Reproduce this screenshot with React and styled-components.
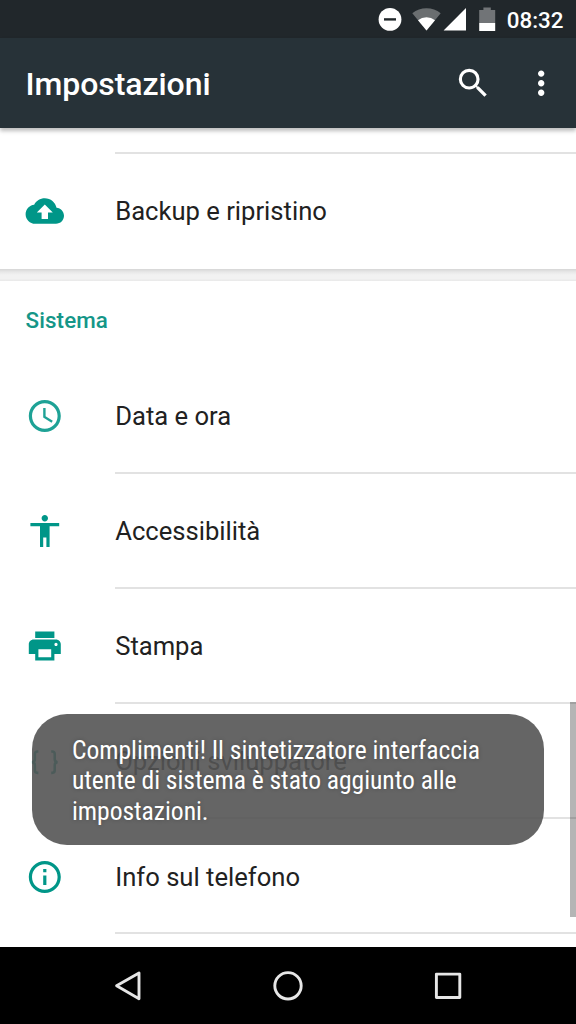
import React from "react";
import styled, { createGlobalStyle } from "styled-components";
import { MdSearch, MdMoreVert } from "react-icons/md";

const GlobalStyle = createGlobalStyle`
body {
margin: 0;
background: #000;
font-family: Roboto, "Noto Sans", sans-serif;
}
* {
box-sizing: border-box;
}
svg {
display: block;
flex: none;
}
`;

const Screen = styled.div`
position: relative;
display: flex;
flex-direction: column;
width: 576px;
height: 1024px;
overflow: hidden;
background: #fff;
`;

const StatusBar = styled.div`
display: flex;
align-items: center;
justify-content: flex-end;
height: 38.4px;
padding-right: 12.5px;
background: #21272b;
color: #fff;
flex: none;
`;

const Clock = styled.span`
font-size: 22.4px;
font-weight: 500;
line-height: 26px;
margin-left: 11px;
padding-top: 2px;
`;

const AppBar = styled.header`
position: relative;
display: flex;
align-items: center;
height: 89.6px;
padding: 0 16px 0 25.6px;
background: #273238;
color: #fff;
box-shadow: 0 3px 4px rgba(0, 0, 0, 0.26);
flex: none;
z-index: 1;
`;

const Title = styled.h1`
flex: 1;
margin: 0;
padding-top: 2px;
font-size: 32px;
font-weight: 500;
line-height: 38px;
letter-spacing: -0.08px;
`;

const Actions = styled.div`
display: flex;
gap: 28.8px;
`;

const List = styled.main`
flex: 1;
min-height: 0;
overflow: hidden;
`;

const Tail = styled.div`
display: flex;
align-items: flex-end;
height: 25.6px;
padding-left: 115.2px;
`;

const Divider = styled.div`
width: 100%;
height: 2px;
background: #e2e2e2;
`;

const Row = styled.div`
display: flex;
height: 115.2px;
padding-left: 25px;
color: #009688;
`;

const RowIcon = styled.div`
display: flex;
align-items: center;
width: 90.2px;
flex: none;
`;

const RowBody = styled.div`
display: flex;
flex-direction: column;
flex: 1;
`;

const Label = styled.div`
display: flex;
align-items: center;
flex: 1;
padding-top: ${(p) => (p.$divided ? "1.6px" : "0")};
font-size: 25.6px;
line-height: 30px;
color: #212121;
`;

const CardGap = styled.div`
height: 12px;
background: linear-gradient(#d6d6d6, #e8e8e8 25%, #f2f2f2 50%, #f2f2f2 80%, #e8e8e8);
`;

const SectionTitle = styled.h2`
display: flex;
align-items: center;
height: 77.6px;
margin: 0;
padding: 1px 0 0 25.6px;
font-size: 22.4px;
font-weight: 500;
letter-spacing: 0.08px;
color: #159688;
`;

const ScrollThumb = styled.div`
position: absolute;
top: 702px;
right: 0;
width: 6.4px;
height: 214.5px;
background: rgba(0, 0, 0, 0.29);
`;

const Toast = styled.div`
position: absolute;
left: 32px;
top: 714px;
width: 512px;
height: 131px;
padding: 21px 40px;
border-radius: 35px;
background: rgba(84, 84, 84, 0.9);
`;

const ToastText = styled.p`
margin: 0;
font-family: "Roboto Condensed", Roboto, sans-serif;
font-stretch: 75%;
font-size: 25.6px;
line-height: 30.4px;
letter-spacing: -0.04px;
color: #fff;
white-space: nowrap;
text-shadow: 0 0 4px rgba(0, 0, 0, 0.25);
`;

const NavBar = styled.nav`
display: grid;
grid-template-columns: repeat(3, 160px);
justify-content: center;
align-items: center;
justify-items: center;
height: 76.8px;
background: #000;
flex: none;
`;

// 24 unit glyph at 1.6x, with a little bleed round it
const Icon = ({ children }) => (
  <svg width="40" height="40" viewBox="-0.375 -0.5 25 25" fill="currentColor">
    {children}
  </svg>
);

const BackupIcon = () => (
  <Icon>
    <path d="M19.35 10.04C18.67 6.59 15.64 4 12 4 9.11 4 6.6 5.64 5.35 8.04 2.34 8.36 0 10.91 0 14c0 3.31 2.69 6 6 6h13c2.76 0 5-2.24 5-5 0-2.64-2.05-4.78-4.65-4.96zM14 13v4h-4v-4H7l5-5 5 5h-3z" />
  </Icon>
);

const ClockIcon = () => (
  <Icon>
    <g opacity="0.88">
      <path d="M12 2C6.48 2 2 6.48 2 12s4.48 10 10 10 10-4.48 10-10S17.52 2 12 2zm0 18c-4.42 0-8-3.58-8-8s3.58-8 8-8 8 3.58 8 8-3.58 8-8 8z" />
      <path d="M12.5 7H11v6l5.2 3.2.8-1.3-4.5-2.7z" />
    </g>
  </Icon>
);

const PersonIcon = () => (
  <Icon>
    <path d="M12 2c1.1 0 2 .9 2 2s-.9 2-2 2-2-.9-2-2 .9-2 2-2zm9 7h-6v13h-2v-6h-2v6H9V9H3V7h18v2z" />
  </Icon>
);

const PrintIcon = () => (
  <Icon>
    <path d="M19 8H5c-1.66 0-3 1.34-3 3v6h4v4h12v-4h4v-6c0-1.66-1.34-3-3-3zm-3 11H8v-5h8v5zm3-7c-.55 0-1-.45-1-1s.45-1 1-1 1 .45 1 1-.45 1-1 1zm-1-9H6v4h12V3z" />
  </Icon>
);

const BracesIcon = () => (
  <Icon>
    <g fill="none" stroke="currentColor" strokeWidth="1.6">
      <path d="M8 5.4h-.6A1.6 1.6 0 0 0 5.8 7v3.2A1.9 1.9 0 0 1 4 12.1a1.9 1.9 0 0 1 1.8 1.9v3.2a1.6 1.6 0 0 0 1.6 1.6H8" />
      <path d="M16 5.4h.6A1.6 1.6 0 0 1 18.2 7v3.2a1.9 1.9 0 0 0 1.8 1.9 1.9 1.9 0 0 0-1.8 1.9v3.2a1.6 1.6 0 0 1-1.6 1.6H16" />
    </g>
  </Icon>
);

const InfoIcon = () => (
  <Icon>
    <path d="M11 17h2v-6h-2v6zm1-15C6.48 2 2 6.48 2 12s4.48 10 10 10 10-4.48 10-10S17.52 2 12 2zm0 18c-4.41 0-8-3.59-8-8s3.59-8 8-8 8 3.59 8 8-3.59 8-8 8zM11 9h2V7h-2v2z" />
  </Icon>
);

const StatusIcons = () => (
  <svg width="118" height="26" viewBox="378 6 118 26" fill="#fff">
    <circle cx="390" cy="19.4" r="11.4" />
    <path d="M384 19.4h12" stroke="#21272b" strokeWidth="2.4" />
    <path d="M412.3 13.2a22.5 22.5 0 0 1 28.4 0L426.5 30.6z" opacity="0.33" />
    <path d="M418 20.2a13.6 13.6 0 0 1 17 0L426.5 30.6z" />
    <path d="M466 8v22.4h-22.4z" />
    <path d="M479.2 10h4.2V7.4h7.4V10h4.4v13h-16z" opacity="0.36" />
    <path d="M479.2 23h16v8h-16z" />
  </svg>
);

const system = [
  { label: "Data e ora", icon: <ClockIcon /> },
  { label: "Accessibilità", icon: <PersonIcon /> },
  { label: "Stampa", icon: <PrintIcon /> },
  { label: "Opzioni sviluppatore", icon: <BracesIcon /> },
  { label: "Info sul telefono", icon: <InfoIcon /> },
];

function SettingsRow({ icon, label, divided }) {
return (
  <Row>
    <RowIcon>{icon}</RowIcon>
    <RowBody>
      <Label $divided={divided}>{label}</Label>
      {divided && <Divider />}
    </RowBody>
  </Row>
);
}

function App() {
return (
  <Screen>
    <GlobalStyle />
    <StatusBar>
      <StatusIcons />
      <Clock>08:32</Clock>
    </StatusBar>
    <AppBar>
      <Title>Impostazioni</Title>
      <Actions>
        <MdSearch size={38.4} />
        <MdMoreVert size={38.4} />
      </Actions>
    </AppBar>
    <List>
      <Tail>
        <Divider />
      </Tail>
      <SettingsRow icon={<BackupIcon />} label="Backup e ripristino" />
      <CardGap />
      <SectionTitle>Sistema</SectionTitle>
      {system.map((item) => (
        <SettingsRow key={item.label} icon={item.icon} label={item.label} divided />
      ))}
    </List>
    <NavBar>
      <svg width="32" height="32" viewBox="0 0 32 32" fill="none" stroke="#e6e6e6" strokeWidth="2.9" strokeLinejoin="round">
        <path d="M27 2.9v25.8L4.6 15.8z" />
      </svg>
      <svg width="32" height="32" viewBox="0 0 32 32" fill="none" stroke="#e6e6e6" strokeWidth="2.9">
        <circle cx="16" cy="15.8" r="13.2" />
      </svg>
      <svg width="32" height="32" viewBox="0 0 32 32" fill="none" stroke="#e6e6e6" strokeWidth="2.9" strokeLinejoin="round">
        <path d="M4.4 4.1h23.4v23.4H4.4z" />
      </svg>
    </NavBar>
    <ScrollThumb />
    <Toast>
      <ToastText>
        Complimenti! Il sintetizzatore interfaccia
        <br />
        utente di sistema è stato aggiunto alle
        <br />
        impostazioni.
      </ToastText>
    </Toast>
  </Screen>
);
}
export default App;
